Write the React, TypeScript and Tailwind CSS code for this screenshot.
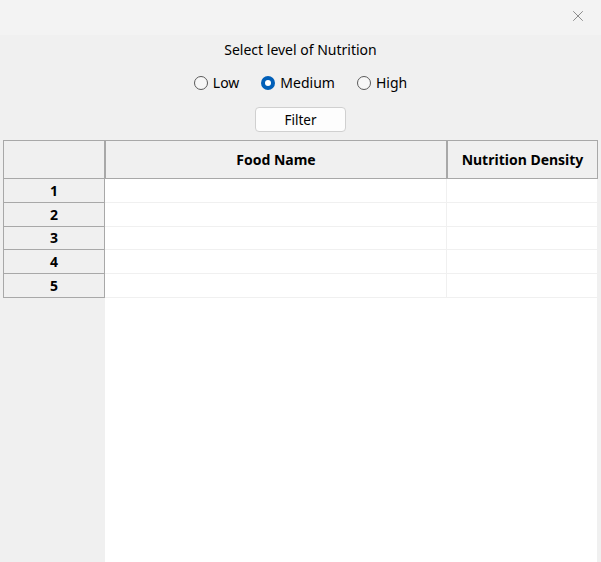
import { X } from "lucide-react";

const rows = [1, 2, 3, 4, 5];

function Radio({ label, checked }: { label: string; checked?: boolean }) {
  return (
    <label className="flex items-center gap-[5px]">
      {checked ? (
        <span className="w-[14px] h-[14px] rounded-full bg-[#005fb8] flex items-center justify-center">
          <span className="w-[6px] h-[6px] rounded-full bg-white" />
        </span>
      ) : (
        <span className="w-[14px] h-[14px] rounded-full border border-[#5a5a5a] bg-[#f7f7f7]" />
      )}
      <span>{label}</span>
    </label>
  );
}

export default function App() {
  return (
    <div
      className="h-[562px] w-[601px] bg-[#f0f0f0] flex flex-col text-[14px] text-black overflow-hidden"
      style={{ fontFamily: '"Noto Sans", "Open Sans", sans-serif' }}
    >
      {/* title bar */}
      <div className="h-[35px] bg-[#f3f3f3] flex justify-end items-start">
        <div className="w-[46px] h-[32px] flex items-center justify-center">
          <X className="w-[18px] h-[18px] text-[#6a6a6a]" strokeWidth={1} />
        </div>
      </div>

      {/* filter controls */}
      <div className="flex flex-col items-center">
        <p className="mt-[5px] leading-[20px]">Select level of Nutrition</p>
        <div className="mt-[13px] flex items-center gap-[22px] leading-[20px]">
          <Radio label="Low" />
          <Radio label="Medium" checked />
          <Radio label="High" />
        </div>
        <button className="mt-[14px] w-[91px] h-[25px] bg-[#fdfdfd] border border-[#d0d0d0] rounded-[4px] text-[13.5px] leading-[20px]">
          Filter
        </button>
      </div>

      {/* table */}
      <div className="mt-[8px] flex-1 flex flex-col">
        <div className="flex h-[39px] ml-[3px] mr-[3px] font-bold">
          <div className="w-[102px] border border-[#a8a8a8] bg-[#f0f0f0]" />
          <div className="w-[342px] border border-[#a8a8a8] bg-[#f0f0f0] flex items-center justify-center">
            Food Name
          </div>
          <div className="flex-1 border border-[#a8a8a8] bg-[#f0f0f0] flex items-center justify-center">
            Nutrition Density
          </div>
        </div>
        <div className="flex-1 flex">
          <div className="w-[105px] pl-[3px]">
            {rows.map((n) => (
              <div
                key={n}
                className="h-[23.8px] border-x border-b border-[#a8a8a8] flex items-center justify-center font-bold"
              >
                {n}
              </div>
            ))}
          </div>
          <div className="w-[492px] bg-white">
            {rows.map((n) => (
              <div key={n} className="h-[23.8px] flex border-b border-[#f0f0f0]">
                <div className="w-[342px] border-r border-[#f0f0f0]" />
                <div className="flex-1" />
              </div>
            ))}
          </div>
        </div>
      </div>
    </div>
  );
}
